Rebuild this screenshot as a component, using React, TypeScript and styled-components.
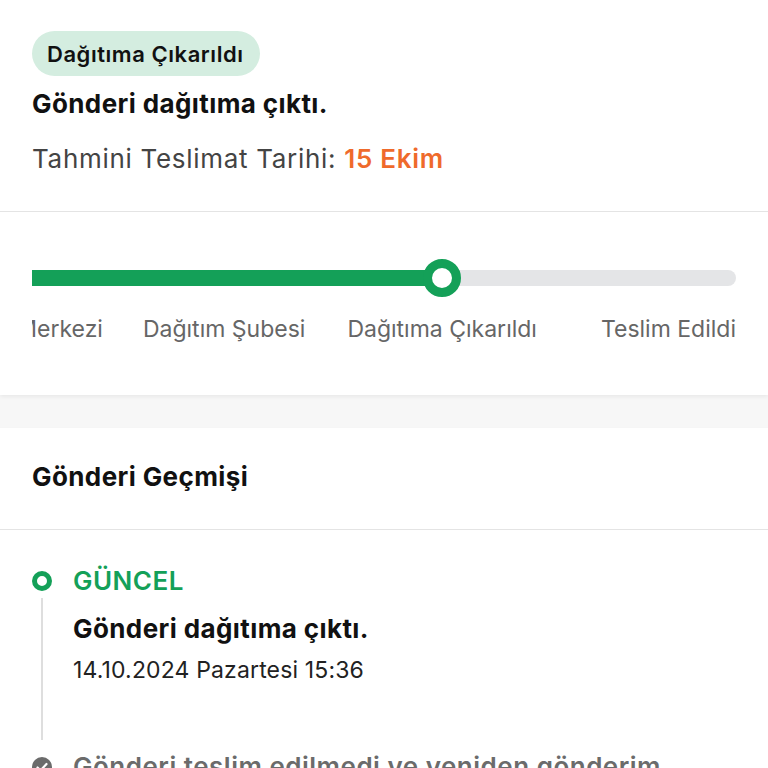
import React from 'react';
import styled, { createGlobalStyle } from 'styled-components';

const GlobalStyle = createGlobalStyle`
  body {
    margin: 0;
    background: #f7f7f7;
    font-family: Inter, "Noto Sans", "Liberation Sans", sans-serif;
    color: #111;
  }
`;

const Page = styled.div`
  width: 768px;
  display: flex;
  flex-direction: column;
  gap: 33px;
`;

const Card = styled.section`
  background: #fff;
  box-shadow: 0 2px 4px rgba(0, 0, 0, 0.06);
`;

const Summary = styled.div`
  padding: 31px 32px 35px;
  display: flex;
  flex-direction: column;
  align-items: flex-start;
  border-bottom: 1px solid #e4e4e4;
`;

const Badge = styled.span`
  height: 45px;
  display: inline-flex;
  align-items: center;
  padding: 0 16px 0 15px;
  border-radius: 23px;
  background: #d4ede0;
  font-size: 22px;
  letter-spacing: 0.55px;
  font-weight: 600;
  color: #111;
`;

const Title = styled.div<{ $top?: number }>`
  margin-top: ${(p) => p.$top ?? 0}px;
  font-size: 26px;
  line-height: 32px;
  letter-spacing: 0.4px;
  font-weight: 700;
  color: #111;
`;

const Estimate = styled.div`
  margin-top: 22px;
  font-size: 26px;
  line-height: 34px;
  letter-spacing: 0.7px;
  color: #444;
`;

const Orange = styled.span`
  color: #ef6a2b;
  font-weight: 600;
`;

const Track = styled.div`
  margin: 0 32px;
  padding: 47px 0 51px;
  display: flex;
  justify-content: flex-end;
  overflow: hidden;
`;

const Step = styled.div`
  flex-shrink: 0;
  display: flex;
  flex-direction: column;
  align-items: stretch;
`;

const Segment = styled.div<{ $state: 'done' | 'half' | 'todo'; $last?: boolean }>`
  position: relative;
  height: 16px;
  margin: 11px 0;
  background: ${(p) =>
    p.$state === 'done'
      ? '#14a058'
      : p.$state === 'half'
      ? 'linear-gradient(90deg, #14a058 50%, #e4e5e7 50%)'
      : '#e4e5e7'};
  border-radius: ${(p) => (p.$last ? '0 8px 8px 0' : '0')};
`;

const Knob = styled.div`
  position: absolute;
  left: 50%;
  top: 50%;
  width: 20px;
  height: 20px;
  margin: -19px 0 0 -19px;
  border-radius: 50%;
  border: 9px solid #14a058;
  background: #fff;
`;

const StepLabel = styled.div<{ $pl: number; $pr: number }>`
  padding: 17px ${(p) => p.$pr}px 0 ${(p) => p.$pl}px;
  font-size: 23px;
  line-height: 30px;
  color: #666;
  white-space: nowrap;
`;

const HistoryHead = styled.div`
  padding: 33px 32px 36px;
  border-bottom: 1px solid #e4e4e4;
`;

const Timeline = styled.div`
  padding: 34px 32px 0;
  height: 204px;
  overflow: hidden;
`;

const Item = styled.div`
  display: grid;
  grid-template-columns: 20px 1fr;
  column-gap: 21px;
`;

const Marker = styled.div`
  display: flex;
  flex-direction: column;
  align-items: center;
  padding-top: 7px;
`;

const Ring = styled.div`
  width: 10px;
  height: 10px;
  border-radius: 50%;
  border: 5px solid #14a058;
`;

const Rail = styled.div`
  flex: 1;
  width: 2px;
  margin: 7px 0 10px;
  background: #dedede;
`;

const Body = styled.div<{ $pb: number }>`
  padding-bottom: ${(p) => p.$pb}px;
`;

const Status = styled.div<{ $muted?: boolean }>`
  font-size: 26px;
  line-height: 34px;
  letter-spacing: 0.5px;
  font-weight: 600;
  color: ${(p) => (p.$muted ? '#6b6b6b' : '#14a058')};
`;

const DateText = styled.div`
  margin-top: 10px;
  font-size: 23px;
  line-height: 30px;
  letter-spacing: 0.15px;
  color: #222;
`;

const steps = [
  { label: 'Transfer Merkezi', state: 'done' as const, pl: 20, pr: 20 },
  { label: 'Dağıtım Şubesi', state: 'done' as const, pl: 20, pr: 22 },
  { label: 'Dağıtıma Çıkarıldı', state: 'half' as const, pl: 20, pr: 20 },
  { label: 'Teslim Edildi', state: 'todo' as const, pl: 44, pr: 0 },
];

const CheckDot = () => (
  <svg width="20" height="20" viewBox="0 0 20 20">
    <circle cx="10" cy="10" r="10" fill="#6b6b6b" />
    <path d="M5.5 10.5l3 3 6-6.5" stroke="#fff" strokeWidth="2.2" fill="none" strokeLinecap="round" strokeLinejoin="round" />
  </svg>
);

const App = () => {
  return (
    <>
      <GlobalStyle />
      <Page>
        <Card>
          <Summary>
            <Badge>Dağıtıma Çıkarıldı</Badge>
            <Title $top={12}>Gönderi dağıtıma çıktı.</Title>
            <Estimate>
              Tahmini Teslimat Tarihi: <Orange>15 Ekim</Orange>
            </Estimate>
          </Summary>
          <Track>
            {steps.map((s, i) => (
              <Step key={s.label}>
                <Segment $state={s.state} $last={i === steps.length - 1}>
                  {s.state === 'half' && <Knob />}
                </Segment>
                <StepLabel $pl={s.pl} $pr={s.pr}>{s.label}</StepLabel>
              </Step>
            ))}
          </Track>
        </Card>
        <Card>
          <HistoryHead>
            <Title>Gönderi Geçmişi</Title>
          </HistoryHead>
          <Timeline>
            <Item>
              <Marker>
                <Ring />
                <Rail />
              </Marker>
              <Body $pb={65}>
                <Status>GÜNCEL</Status>
                <Title $top={15}>Gönderi dağıtıma çıktı.</Title>
                <DateText>14.10.2024 Pazartesi 15:36</DateText>
              </Body>
            </Item>
            <Item>
              <Marker>
                <CheckDot />
              </Marker>
              <Body $pb={0}>
                <Status $muted>Gönderi teslim edilmedi ve yeniden gönderim</Status>
              </Body>
            </Item>
          </Timeline>
        </Card>
      </Page>
    </>
  );
};

export default App;
